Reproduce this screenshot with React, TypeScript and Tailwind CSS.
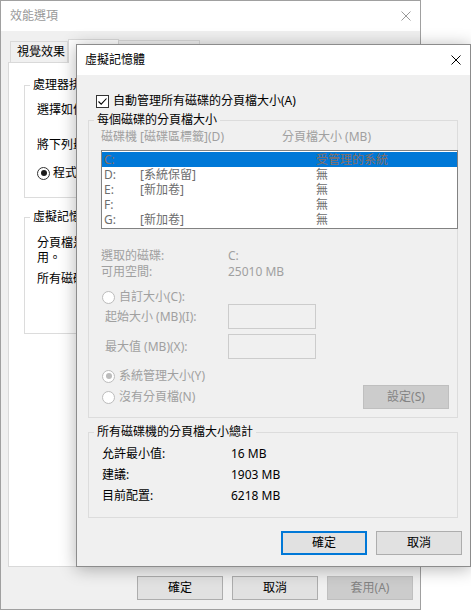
import type { ReactNode } from 'react'

// Windows 10 dialogs: 效能選項 (inactive, behind) + 虛擬記憶體 (active, on top)

function CloseIcon({ color }: { color: string }) {
  return (
    <svg width="10" height="10" viewBox="0 0 10 10" fill="none">
      <path d="M0.5 0.5L9.5 9.5M9.5 0.5L0.5 9.5" stroke={color} strokeWidth="1" />
    </svg>
  )
}

function GroupBox({
  title,
  legendBg,
  className,
  children,
}: {
  title: string
  legendBg: string
  className?: string
  children: ReactNode
}) {
  return (
    <div className={`relative border border-[#dcdcdc] ${className ?? ''}`}>
      <span className={`absolute -top-[8px] left-[5px] whitespace-nowrap px-[3px] leading-[14px] text-black ${legendBg}`}>
        {title}
      </span>
      {children}
    </div>
  )
}

function Radio({ checked, disabled }: { checked?: boolean; disabled?: boolean }) {
  return (
    <span
      className={`flex h-[13px] w-[13px] shrink-0 items-center justify-center rounded-full border bg-white ${
        disabled ? 'border-[#bcbcbc]' : 'border-[#333333]'
      }`}
    >
      {checked && (
        <span className={`h-[6px] w-[6px] rounded-full ${disabled ? 'bg-[#bcbcbc]' : 'bg-[#1a1a1a]'}`} />
      )}
    </span>
  )
}

function Button({ children, variant = 'normal' }: { children: ReactNode; variant?: 'normal' | 'default' | 'disabled' }) {
  const styles =
    variant === 'default'
      ? 'border-2 border-[#0078d7] bg-[#e1e1e1] text-black'
      : variant === 'disabled'
        ? 'border border-[#bfbfbf] bg-[#cccccc] text-[#838383]'
        : 'border border-[#adadad] bg-[#e1e1e1] text-black'
  return (
    <div className={`flex h-[24px] w-[86px] shrink-0 items-center justify-center leading-[14px] ${styles}`}>
      {children}
    </div>
  )
}

const DRIVES = [
  { letter: 'C:', label: '', size: '受管理的系統', selected: true },
  { letter: 'D:', label: '[系統保留]', size: '無' },
  { letter: 'E:', label: '[新加卷]', size: '無' },
  { letter: 'F:', label: '', size: '無' },
  { letter: 'G:', label: '[新加卷]', size: '無' },
]

// back window: only the part left of the dialog is visible, so only that text is written
function PerformanceOptions() {
  return (
    <div className="absolute left-0 top-0 flex h-[610px] w-[421px] flex-col border border-[#a0a0a0] bg-[#f0f0f0]">
      {/* Title */}
      <div className="flex h-[30px] shrink-0 items-center justify-between bg-white px-[9px]">
        <span className="text-[#999999]">效能選項</span>
        <CloseIcon color="#9a9a9a" />
      </div>

      <div className="flex flex-1 flex-col px-[7px] pt-[8px]">
        {/* Tabs */}
        <div className="flex h-[23px] items-end pl-[2px]">
          <div className="flex h-[21px] w-[58px] items-center border border-b-0 border-[#d9d9d9] bg-[#f0f0f0] pl-[6px]">
            視覺效果
          </div>
          <div className="relative z-10 -mb-[1px] h-[24px] w-[51px] border border-b-0 border-[#d9d9d9] bg-white" />
          <div className="h-[22px] w-[81px] border border-b-0 border-l-0 border-[#d9d9d9] bg-[#f0f0f0]" />
        </div>

        {/* Panel */}
        <div className="h-[505px] overflow-hidden border border-[#d9d9d9] bg-white">
          <GroupBox title="處理器排" legendBg="bg-white" className="ml-[15px] mt-[22px] h-[113px] w-[372px] pl-[12px] pt-[17px]">
            <div className="whitespace-nowrap">選擇如何</div>
            <div className="mt-[21px] whitespace-nowrap">將下列最</div>
            <div className="mt-[14px] flex h-[14px] items-center gap-[3px]">
              <Radio checked />
              <span>程式</span>
            </div>
          </GroupBox>

          <GroupBox title="虛擬記憶" legendBg="bg-white" className="ml-[15px] mt-[19px] h-[117px] w-[372px] pl-[12px] pt-[18px]">
            <div className="whitespace-nowrap">分頁檔是</div>
            <div className="mt-[1px]">用。</div>
            <div className="mt-[7px] whitespace-nowrap">所有磁碟</div>
          </GroupBox>
        </div>

        {/* Buttons */}
        <div className="mt-[9px] flex justify-end gap-[9px]">
          <Button>確定</Button>
          <Button>取消</Button>
          <Button variant="disabled">套用(A)</Button>
        </div>
      </div>
    </div>
  )
}

function VirtualMemoryDialog() {
  return (
    <div className="absolute left-[76px] top-[44px] z-20 flex h-[523px] w-[395px] flex-col border border-[#8c8c8c] bg-[#f0f0f0] shadow-[0_2px_16px_rgba(0,0,0,0.3)]">
      {/* Title */}
      <div className="flex h-[30px] shrink-0 items-center justify-between bg-white pl-[8px] pr-[9px]">
        <span>虛擬記憶體</span>
        <CloseIcon color="#000000" />
      </div>

      <div className="flex flex-1 flex-col px-[11px] pt-[19px]">
        {/* Auto manage */}
        <div className="flex h-[14px] items-center gap-[4px] pl-[8px]">
          <span className="flex h-[13px] w-[13px] items-center justify-center border border-[#333333] bg-white">
            <svg width="11" height="11" viewBox="0 0 11 11" fill="none">
              <path d="M1.5 5.5L4.2 8.2L9.5 2.5" stroke="#000" strokeWidth="1.1" />
            </svg>
          </span>
          <span>自動管理所有磁碟的分頁檔大小(A)</span>
        </div>

        {/* Per drive */}
        <GroupBox
          title="每個磁碟的分頁檔大小"
          legendBg="bg-[#f0f0f0]"
          className="mt-[12px] h-[298px] w-[370px] pl-[12px] pr-[8px] pt-[9px]"
        >
          <div className="flex h-[14px] text-[#a0a0a0]">
            <span className="w-[181px]">磁碟機 [磁碟區標籤](D)</span>
            <span>分頁檔大小 (MB)</span>
          </div>

          <div className="mt-[6px] h-[79px] w-[357px] border border-[#828282] bg-white pt-[1px]">
            {DRIVES.map((d) => (
              <div
                key={d.letter}
                className={`flex h-[15px] items-center ${d.selected ? 'bg-[#0078d7] text-[#8a6f62]' : 'text-[#6d6d6d]'}`}
              >
                <span className="w-[38px] pl-[2px]">{d.letter}</span>
                <span className="w-[176px]">{d.label}</span>
                <span>{d.size}</span>
              </div>
            ))}
          </div>

          <div className="mt-[20px] flex h-[14px] text-[#a0a0a0]">
            <span className="w-[127px]">選取的磁碟:</span>
            <span>C:</span>
          </div>
          <div className="mt-[2px] flex h-[14px] text-[#a0a0a0]">
            <span className="w-[127px]">可用空間:</span>
            <span>25010 MB</span>
          </div>

          <div className="mt-[11px] flex h-[14px] items-center gap-[4px] pl-[1px] text-[#a0a0a0]">
            <Radio disabled />
            <span>自訂大小(C):</span>
          </div>
          <div className="flex h-[25px] items-center text-[#a0a0a0]">
            <span className="w-[127px] pl-[4px]">起始大小 (MB)(I):</span>
            <span className="h-[25px] w-[88px] border border-[#cccccc] bg-[#f0f0f0]" />
          </div>
          <div className="mt-[5px] flex h-[25px] items-center text-[#a0a0a0]">
            <span className="w-[127px] pl-[4px]">最大值 (MB)(X):</span>
            <span className="h-[25px] w-[88px] border border-[#cccccc] bg-[#f0f0f0]" />
          </div>

          <div className="mt-[10px] flex h-[14px] items-center gap-[4px] pl-[1px] text-[#a0a0a0]">
            <Radio checked disabled />
            <span>系統管理大小(Y)</span>
          </div>
          <div className="mt-[2px] flex h-[24px] items-center justify-between">
            <div className="flex items-center gap-[4px] pl-[1px] text-[#a0a0a0]">
              <Radio disabled />
              <span>沒有分頁檔(N)</span>
            </div>
            <Button variant="disabled">設定(S)</Button>
          </div>
        </GroupBox>

        {/* Totals */}
        <GroupBox
          title="所有磁碟機的分頁檔大小總計"
          legendBg="bg-[#f0f0f0]"
          className="mt-[14px] h-[86px] w-[370px] pl-[13px] pt-[14px]"
        >
          <div className="flex h-[14px]">
            <span className="w-[129px]">允許最小值:</span>
            <span>16 MB</span>
          </div>
          <div className="mt-[7px] flex h-[14px]">
            <span className="w-[129px]">建議:</span>
            <span>1903 MB</span>
          </div>
          <div className="mt-[7px] flex h-[14px]">
            <span className="w-[129px]">目前配置:</span>
            <span>6218 MB</span>
          </div>
        </GroupBox>

        {/* Buttons */}
        <div className="-mr-[3px] mt-[13px] flex justify-end gap-[9px]">
          <Button variant="default">確定</Button>
          <Button>取消</Button>
        </div>
      </div>
    </div>
  )
}

export default function App() {
  return (
    <div className="relative h-[610px] w-[471px] overflow-hidden bg-white font-['Noto_Sans','Noto_Sans_CJK_TC',sans-serif] text-[12px] leading-[14px] text-black">
      <PerformanceOptions />
      <VirtualMemoryDialog />
    </div>
  )
}
